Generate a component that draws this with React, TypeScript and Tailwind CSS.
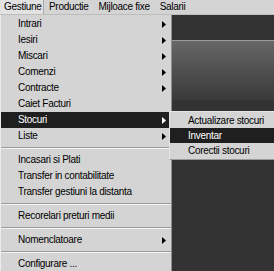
import React from "react"

type Item = { label: string; sub?: boolean; active?: boolean } | "sep"

const MENUBAR = ["Gestiune", "Productie", "Mijloace fixe", "Salarii"]

const ITEMS: Item[] = [
  { label: "Intrari", sub: true },
  { label: "Iesiri", sub: true },
  { label: "Miscari", sub: true },
  { label: "Comenzi", sub: true },
  { label: "Contracte", sub: true },
  { label: "Caiet Facturi" },
  { label: "Stocuri", sub: true, active: true },
  { label: "Liste", sub: true },
  "sep",
  { label: "Incasari si Plati" },
  { label: "Transfer in contabilitate" },
  { label: "Transfer gestiuni la distanta" },
  "sep",
  { label: "Recorelari preturi medii" },
  "sep",
  { label: "Nomenclatoare", sub: true },
  "sep",
  { label: "Configurare ..." },
]

const SUBMENU = [
  { label: "Actualizare stocuri" },
  { label: "Inventar", active: true },
  { label: "Corectii stocuri" },
]

function Arrow({ white }: { white?: boolean }) {
  return (
    <svg width="4" height="7" viewBox="0 0 4 7" className={white ? "fill-white" : "fill-black"}>
      <path d="M0 0L4 3.5L0 7z" />
    </svg>
  )
}

export default function App() {
  return (
    <div
      className="relative w-[274px] h-[271px] overflow-hidden flex flex-col bg-[#333333] text-[10px] tracking-[-0.3px] text-black"
      style={{ fontFamily: '"Liberation Sans", Arial, sans-serif' }}
    >
      {/* menubar */}
      <div className="h-[15px] flex items-stretch bg-[#d4d4d4] border-b border-[#bdbdbd]">
        {MENUBAR.map((m, i) => (
          <div
            key={m}
            className={`flex items-center leading-none px-[4px] ${
              i === 0 ? "bg-[#e2e2e2] border-r border-[#a8a8a8] w-[44px]" : "mx-[1px]"
            }`}
          >
            {m}
          </div>
        ))}
      </div>

      {/* workspace behind the menu */}
      <div className="h-[25px] bg-[#333333]" />
      <div className="h-[60px] border-t border-[#9c9c9c] bg-gradient-to-b from-[#676767] to-[#3a3a3a]" />
      <div className="flex-1 bg-[#333333]" />

      {/* dropdown */}
      <div className="absolute top-[15px] left-0 w-[172px] pt-[1px] bg-[#d4d4d4] border-r border-[#8e8e8e] border-l border-l-[#ececec]">
        {ITEMS.map((it, i) =>
          it === "sep" ? (
            <div key={i} className="h-[8px] flex flex-col justify-center">
              <div className="h-px bg-[#9a9a9a]" />
              <div className="h-px bg-[#f4f4f4]" />
            </div>
          ) : (
            <div
              key={it.label}
              className={`h-[16px] flex items-center justify-between pl-[17px] pr-[5px] leading-none ${
                it.active ? "bg-[#1f1f1f] text-white" : ""
              }`}
            >
              <span>{it.label}</span>
              {it.sub && <Arrow white={it.active} />}
            </div>
          )
        )}
      </div>

      {/* submenu */}
      <div className="absolute top-[111px] left-[169px] w-[116px] py-[1px] bg-[#d4d4d4] border border-[#9a9a9a] border-l-[#e6e6e6] border-t-[#e6e6e6]">
        {SUBMENU.map((s) => (
          <div
            key={s.label}
            className={`h-[15px] flex items-center pl-[18px] leading-none ${
              s.active ? "bg-[#1f1f1f] text-white" : ""
            }`}
          >
            {s.label}
          </div>
        ))}
      </div>
    </div>
  )
}
